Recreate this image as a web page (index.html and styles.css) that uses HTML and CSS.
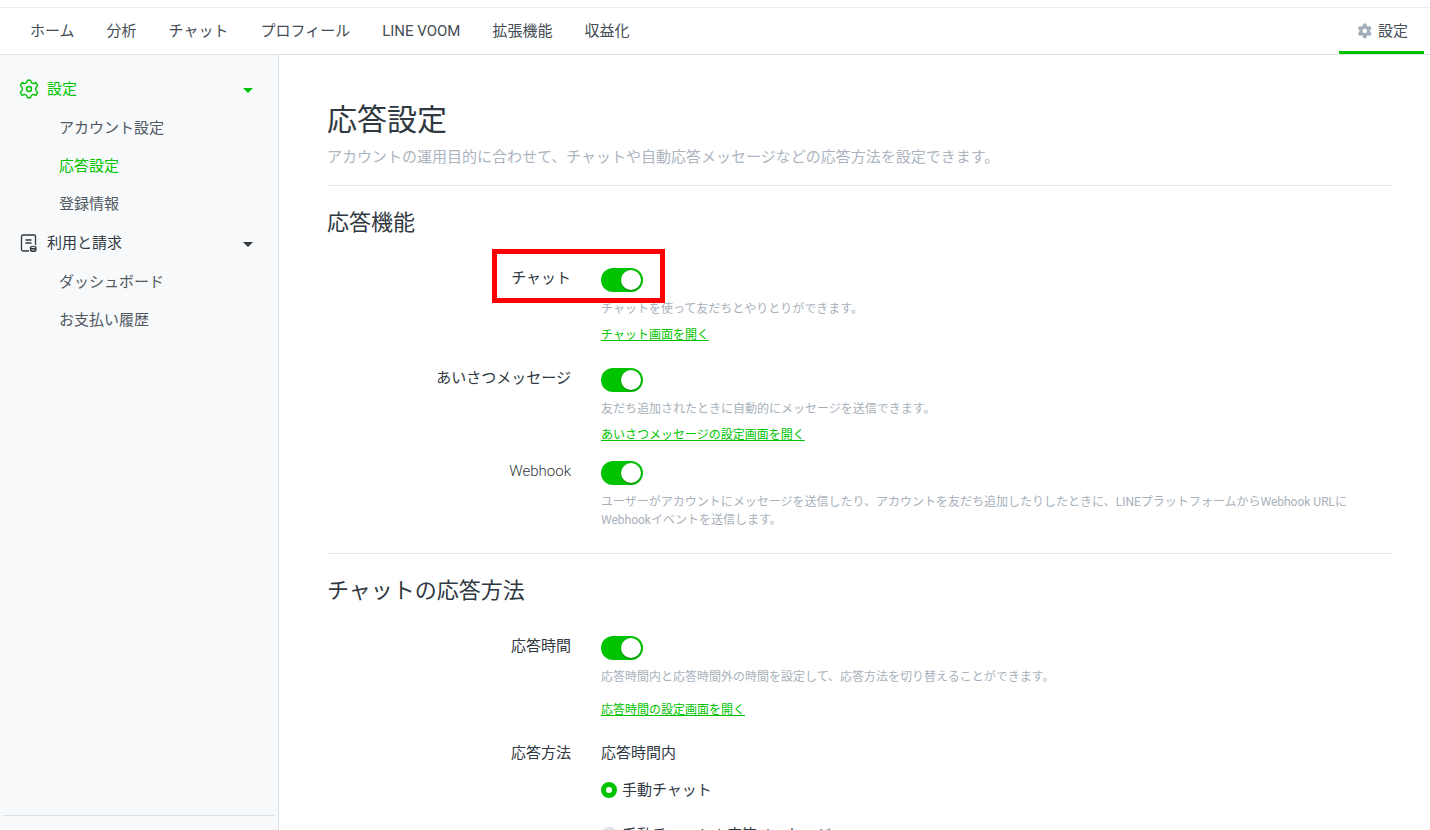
FILE: index.html
```html
<!DOCTYPE html>
<html lang="ja">
<head>
    <meta charset="UTF-8">
    <meta name="viewport" content="width=device-width, initial-scale=1">
    <title>応答設定</title>
    <link rel="stylesheet" href="styles.css">
</head>
<body>

<header class="header">
    <nav class="nav">
        <a href="#">ホーム</a>
        <a href="#">分析</a>
        <a href="#">チャット</a>
        <a href="#">プロフィール</a>
        <a href="#">LINE VOOM</a>
        <a href="#">拡張機能</a>
        <a href="#">収益化</a>
        <a href="#" class="nav-settings">
            <svg width="18" height="18" viewBox="0 0 18 18" aria-hidden="true">
                <path fill="#a3aebb" fill-rule="evenodd" d="M8.300 1.600h2.900l.5 2.100 1.300.8 2.100-.6 1.500 2.500-1.500 1.600v1.800l1.500 1.600-1.500 2.500-2.100-.6-1.300.8-.5 2.100H8.300l-.5-2.100-1.300-.8-2.100.6-1.500-2.500 1.500-1.600V8l-1.500-1.600 1.500-2.500 2.100.6 1.300-.8zM9.750 6.700a2.200 2.200 0 1 0 0 4.400 2.200 2.200 0 0 0 0-4.400z"/>
            </svg>
            設定
        </a>
    </nav>
</header>

<div class="layout">
    <aside class="sidebar">
        <div class="menu">
            <button type="button" class="menu-head active">
                <svg width="20" height="20" viewBox="0 0 20 20" fill="none" stroke="currentColor" stroke-width="1.4" stroke-linejoin="round" aria-hidden="true">
                    <path d="M8.500 1.200h3q.4 2.700 2 3.200 1.500.4 3.400-.8l1.700 2.800q-2 1.800-2 3.600t2 3.600l-1.700 2.800q-1.900-1.200-3.400-.8-1.600.5-2 3.200h-3q-.4-2.700-2-3.200-1.500-.4-3.400.8l-1.700-2.800q2-1.800 2-3.600t-2-3.600l1.700-2.800q1.900 1.200 3.400.8 1.600-.5 2-3.200z"/>
                    <circle cx="10" cy="10" r="2.500"/>
                </svg>
                <span>設定</span>
            </button>
            <ul>
                <li><a href="#">アカウント設定</a></li>
                <li><a href="#" class="active">応答設定</a></li>
                <li><a href="#">登録情報</a></li>
            </ul>
            <button type="button" class="menu-head">
                <svg width="20" height="20" viewBox="0 0 20 20" fill="none" stroke="currentColor" stroke-width="1.300" aria-hidden="true">
                    <path d="M10 18H4a1.500 1.500 0 0 1-1.500-1.500v-13A1.500 1.500 0 0 1 4 2h11A1.500 1.500 0 0 1 16.500 3.500V12M6.500 7h6M6.500 10h6"/>
                    <path stroke-width="1.100" d="M11.400 14.500c0-1.600 5.600-1.600 5.600 0v2.700c0 1.700-5.600 1.700-5.600 0zM11.400 14.500c0 1.300 5.600 1.300 5.600 0M11.400 16c0 1.300 5.600 1.300 5.600 0"/>
                </svg>
                <span>利用と請求</span>
            </button>
            <ul>
                <li><a href="#">ダッシュボード</a></li>
                <li><a href="#">お支払い履歴</a></li>
            </ul>
        </div>
        <div class="sidebar-foot"></div>
    </aside>

    <main class="content">
        <h1>応答設定</h1>
        <p class="lead">アカウントの運用目的に合わせて、チャットや自動応答メッセージなどの応答方法を設定できます。</p>

        <section>
            <h2>応答機能</h2>

            <div class="row row-wide">
                <label class="row-label" for="chat">チャット</label>
                <div class="row-body">
                    <input type="checkbox" class="toggle" id="chat" checked>
                    <p class="help">チャットを使って友だちとやりとりができます。</p>
                    <a class="link" href="#">チャット画面を開く</a>
                </div>
                <div class="highlight"></div>
            </div>

            <div class="row">
                <label class="row-label" for="greeting">あいさつメッセージ</label>
                <div class="row-body">
                    <input type="checkbox" class="toggle" id="greeting" checked>
                    <p class="help">友だち追加されたときに自動的にメッセージを送信できます。</p>
                    <a class="link" href="#">あいさつメッセージの設定画面を開く</a>
                </div>
            </div>

            <div class="row">
                <label class="row-label row-label-light" for="webhook">Webhook</label>
                <div class="row-body">
                    <input type="checkbox" class="toggle" id="webhook" checked>
                    <p class="help">ユーザーがアカウントにメッセージを送信したり、アカウントを友だち追加したりしたときに、LINEプラットフォームからWebhook URLにWebhookイベントを送信します。</p>
                </div>
            </div>
        </section>

        <section>
            <h2>チャットの応答方法</h2>

            <div class="row row-wide">
                <label class="row-label" for="hours">応答時間</label>
                <div class="row-body">
                    <input type="checkbox" class="toggle" id="hours" checked>
                    <p class="help">応答時間内と応答時間外の時間を設定して、応答方法を切り替えることができます。</p>
                    <a class="link link-spaced" href="#">応答時間の設定画面を開く</a>
                </div>
            </div>

            <div class="row" role="radiogroup" aria-labelledby="method-label">
                <div class="row-label" id="method-label">応答方法</div>
                <div class="row-body">
                    <div class="radio-title">応答時間内</div>
                    <label class="radio"><input type="radio" name="method" checked>手動チャット</label>
                    <label class="radio"><input type="radio" name="method">手動チャット＋応答メッセージ</label>
                </div>
            </div>
        </section>
    </main>
</div>

</body>
</html>
```
FILE: styles.css
```css
* {
    box-sizing: border-box;
}
body {
    display: flex;
    flex-direction: column;
    height: 100vh;
    margin: 0;
    overflow: hidden;
    font-family: Roboto, "Noto Sans CJK JP", sans-serif;
    font-size: 15px;
    line-height: 22px;
    color: #303841;
    background-color: #fff;
}
h1, h2, p, ul {
    margin: 0;
    padding: 0;
    font-weight: 400;
}
ul {
    list-style: none;
}
a {
    color: inherit;
    text-decoration: none;
}

/* header */
.header {
    flex: none;
    padding-top: 7px;
    border-bottom: 1px solid #dfe2e8;
}
.nav {
    display: flex;
    height: 47px;
    padding: 0 6px 0 14px;
    border-top: 1px solid #ebecef;
    color: #444c55;
}
.nav a {
    display: flex;
    align-items: center;
    padding: 0 16px;
    white-space: nowrap;
}
.nav .nav-settings {
    gap: 5px;
    margin-left: auto;
    box-shadow: inset 0 -3px #00c300;
}

.layout {
    display: flex;
    flex: 1;
    min-height: 0;
}

/* sidebar */
.sidebar {
    display: flex;
    flex: none;
    flex-direction: column;
    width: 279px;
    padding-top: 14px;
    border-right: 1px solid #dadfe4;
    background-color: #f7f9fb;
}
.menu {
    flex: 1;
}
.menu-head {
    display: flex;
    align-items: center;
    gap: 8px;
    width: 100%;
    height: 40px;
    padding: 0 25px 0 19px;
    border: 0;
    background: none;
    font: inherit;
    color: inherit;
}
.menu-head::after {
    content: "";
    margin-top: 2px;
    margin-left: auto;
    border: 5px solid transparent;
    border-top-color: currentColor;
    border-bottom: 0;
}
.menu li a {
    display: block;
    padding: 8px 0 8px 59px;
    color: #505860;
}
.menu .menu-head.active, .menu li a.active {
    color: #00c300;
}
.sidebar-foot {
    height: 15px;
    margin: 0 4px 0 3px;
    border-top: 1px solid #dadfe4;
}

/* content */
.content {
    flex: 1;
    min-width: 0;
    padding: 43px 39px 40px 48px;
    overflow-y: auto;
    scrollbar-width: none;
}
h1 {
    margin-bottom: 4px;
    font-size: 30px;
    line-height: 44px;
}
.lead {
    margin-bottom: 17px;
    color: #acb5bf;
}
section {
    padding: 20px 0 24px;
    border-top: 1px solid #e3e5e8;
}
h2 {
    margin-bottom: 27px;
    font-size: 22px;
    line-height: 34px;
}
.row {
    position: relative;
    display: grid;
    grid-template-columns: 244px 1fr;
    gap: 30px;
    margin-bottom: 16px;
}
.row-wide {
    margin-bottom: 23px;
}
.row:last-child {
    margin-bottom: 0;
}
.row-label {
    text-align: right;
}
.row-label-light {
    font-weight: 300;
}
.row-body {
    padding-right: 15px;
}
.toggle {
    appearance: none;
    display: block;
    width: 42px;
    height: 24px;
    margin: 1px 0 8px;
    padding: 2px;
    border-radius: 12px;
    background-color: #00c300;
}
.toggle::before {
    content: "";
    display: block;
    width: 20px;
    height: 20px;
    border-radius: 50%;
    background-color: #fff;
    box-shadow: 0 1px 2px rgba(0, 0, 0, 0.3);
}
.toggle:checked::before {
    margin-left: auto;
}
.help {
    font-size: 12px;
    line-height: 18px;
    color: #a8b1bb;
}
.link {
    display: block;
    width: fit-content;
    margin-top: 8px;
    font-size: 12px;
    line-height: 18px;
    color: #00c300;
    text-decoration: underline;
}
.link-spaced {
    margin-top: 15px;
}
.radio-title {
    margin-bottom: 15px;
}
.radio {
    display: flex;
    align-items: center;
    gap: 5px;
    margin-bottom: 23px;
}
.radio input {
    appearance: none;
    width: 16px;
    height: 16px;
    margin: 0;
    border: 1px solid #d5dae0;
    border-radius: 50%;
    background-color: #e4e8ec;
}
.radio input:checked {
    border: 5px solid #00c300;
    background-color: #fff;
}
.highlight {
    position: absolute;
    top: -18px;
    left: 165px;
    width: 173px;
    height: 54px;
    border: 5px solid #f00;
    pointer-events: none;
}
```
